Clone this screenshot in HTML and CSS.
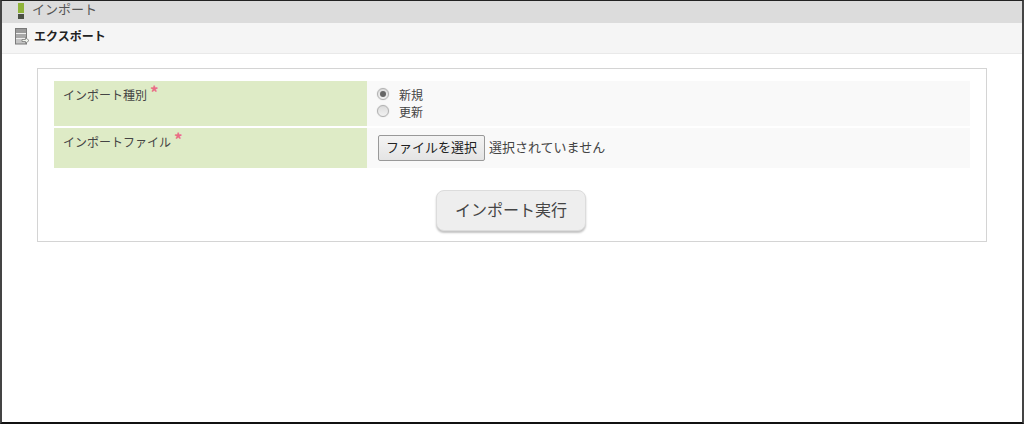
FILE: index.html
```html
<!DOCTYPE html>
<html lang="ja">
<head>
<meta charset="utf-8">
<title>インポート</title>
<link rel="stylesheet" href="styles.css">
</head>
<body>
<div class="frame">
  <div class="tab-head">
    <svg class="bar-icon" width="6" height="16" viewBox="0 0 6 16"><rect width="6" height="10" fill="#8fb339"/><rect y="11" width="6" height="5" fill="#4a4f44"/></svg>
    <span>インポート</span>
  </div>
  <div class="sub-head">
    <svg class="sub-icon" width="15" height="17" viewBox="0 0 15 17">
      <rect x="0.5" y="0.5" width="11" height="15.500" fill="#c4c4c4" stroke="#7a7a7a"/>
      <rect x="1" y="1" width="10" height="4" fill="#9a9a9a"/>
      <rect x="1" y="6" width="10" height="4" fill="#a8a8a8"/>
      <path d="M1 5.500h10M1 10.500h10" stroke="#eeeeee"/>
      <path d="M7 11.500h3.500v-2l3.500 3-3.500 3v-2H7z" fill="#f2f5ee" stroke="#7a7a7a" stroke-width="0.800"/>
    </svg>
    <span>エクスポート</span>
  </div>
  <div class="content">
    <div class="box">
      <div class="form-grid">
        <div class="label">インポート種別<span class="req">*</span></div>
        <div class="value value-radio">
          <label class="radio-row"><span class="radio radio-on"></span>新規</label>
          <label class="radio-row"><span class="radio"></span>更新</label>
        </div>
        <div class="label">インポートファイル<span class="req">*</span></div>
        <div class="value value-file">
          <button class="file-btn" type="button">ファイルを選択</button>
          <span>選択されていません</span>
        </div>
      </div>
      <div class="actions">
        <button class="run-btn" type="button">インポート実行</button>
      </div>
    </div>
  </div>
</div>
</body>
</html>
```
FILE: styles.css
```css
* { box-sizing: border-box; }
html, body { margin: 0; padding: 0; height: 100%; }
body {
  font-family: "Noto Sans CJK JP", "Liberation Sans", sans-serif;
  color: #333;
  background: #fff;
}
.frame {
  width: 1024px;
  height: 424px;
  border-top: 1px solid #222;
  border-left: 2px solid #444;
  border-right: 2px solid #444;
  border-bottom: 2px solid #111;
  overflow: hidden;
}
.tab-head {
  height: 22px;
  background: #dcdcdc;
  display: flex;
  align-items: flex-start;
  padding-left: 16px;
  font-size: 13px;
  line-height: 15px;
  color: #555;
}
.tab-head .bar-icon { margin-top: 2px; margin-right: 8px; }
.sub-head {
  height: 31px;
  background: #f5f5f5;
  border-bottom: 1px solid #e9e9e9;
  display: flex;
  align-items: flex-start;
  padding: 5px 0 0 13px;
  font-size: 12px;
  line-height: 15px;
  font-weight: 700;
  color: #222;
}
.sub-icon { margin-right: 4px; }
.content { padding: 14px 35px 0; }
.box {
  border: 1px solid #d4d4d4;
  height: 174px;
  padding: 12px 16px 0;
}
.form-grid {
  display: grid;
  grid-template-columns: 313px 603px;
  grid-template-rows: 45px 40px;
  row-gap: 2px;
}
.label {
  background: #deebc6;
  font-size: 12px;
  line-height: 18px;
  padding: 5px 0 0 9px;
  color: #444;
}
.req {
  color: #ea6d86;
  font-size: 17px;
  font-weight: 700;
  line-height: 12px;
  margin-left: 3px;
  position: relative;
  top: -1px;
}
.value { background: #f9f9f9; font-size: 12px; color: #444; }
.value-radio { padding: 5px 0 0 10px; }
.radio-row { display: flex; align-items: center; height: 17px; }
.radio {
  width: 12px;
  height: 12px;
  border-radius: 50%;
  border: 1px solid #b0b0b0;
  background: linear-gradient(#dcdcdc, #f2f2f2);
  box-shadow: 0 0 1px #bbb;
  margin-right: 10px;
  margin-top: -1px;
  display: flex;
  align-items: center;
  justify-content: center;
}
.radio-on::after {
  content: "";
  width: 6px;
  height: 6px;
  border-radius: 50%;
  background: #666;
}
.value-file { display: flex; align-items: flex-start; padding: 7px 0 0 11px; font-size: 13px; }
.value-file span { line-height: 24px; margin-left: 4px; }
.file-btn {
  height: 26px;
  width: 107px;
  padding: 0 0 3px;
  font-family: inherit;
  font-size: 13px;
  color: #222;
  background: linear-gradient(#f4f4f4, #e4e4e4);
  border: 1px solid #999;
  border-radius: 2px;
}
.actions { display: flex; justify-content: center; padding-top: 22px; padding-right: 2px; }
.run-btn {
  width: 150px;
  height: 41px;
  font-family: inherit;
  font-size: 16px;
  color: #444;
  background: #eeeeee;
  border: 1px solid #dcdcdc;
  border-radius: 8px;
  box-shadow: 0 2px 2px #c4c4c4;
  padding: 0 0 4px;
}
```
